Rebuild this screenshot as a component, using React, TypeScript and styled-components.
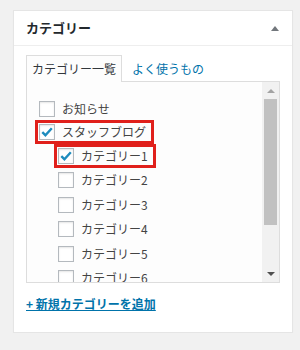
import React from "react";
import styled, { createGlobalStyle } from "styled-components";

const GlobalStyle = createGlobalStyle`
  html, body {
    margin: 0;
    padding: 0;
    background: #f1f1f1;
  }
  body {
    font-family: "Noto Sans CJK JP", "Noto Sans", sans-serif;
    font-size: 12px;
    color: #444;
  }
`;

const Page = styled.div`
  padding: 10px 0 0 13px;
`;

const Panel = styled.div`
  width: 280px;
  box-sizing: border-box;
  border: 1px solid #e5e5e5;
  background: #fff;
  box-shadow: 0 1px 1px rgba(0, 0, 0, 0.04);
`;

const Header = styled.div`
  height: 34px;
  border-bottom: 1px solid #eee;
  display: flex;
  align-items: center;
  justify-content: space-between;
  padding: 0 13px 0 12px;
`;

const Title = styled.h2`
  margin: 0;
  font-size: 13px;
  font-weight: bold;
  color: #23282d;
  line-height: 18px;
`;

const Toggle = styled.span`
  width: 0;
  height: 0;
  border-left: 4px solid transparent;
  border-right: 4px solid transparent;
  border-bottom: 5px solid #72777c;
`;

const Body = styled.div`
  padding: 9px 12px 20px 12px;
`;

const Tabs = styled.ul`
  display: flex;
  align-items: flex-end;
  margin: 0;
  padding: 0;
  list-style: none;
  position: relative;
  z-index: 1;
`;

const Tab = styled.li<{ $active?: boolean }>`
  height: 27px;
  box-sizing: border-box;
  line-height: 25px;
  padding: ${(p) => (p.$active ? "0 5px" : "0 0 0 9px")};
  margin-bottom: -1px;
  border: 1px solid ${(p) => (p.$active ? "#ddd" : "transparent")};
  border-bottom: none;
  background: ${(p) => (p.$active ? "#fdfdfd" : "transparent")};
  color: ${(p) => (p.$active ? "#32373c" : "#0073aa")};
  cursor: pointer;
`;

const Box = styled.div`
  display: flex;
  height: 202px;
  box-sizing: border-box;
  border: 1px solid #ddd;
  background: #fdfdfd;
`;

const List = styled.ul`
  flex: 1;
  margin: 0;
  padding: 15.5px 0 0 12px;
  list-style: none;
  overflow: hidden;
`;

const Children = styled.ul`
  margin: 0;
  padding: 0 0 0 19px;
  list-style: none;
`;

const Row = styled.div<{ $first?: boolean }>`
  display: flex;
  align-items: center;
  height: ${(p) => (p.$first ? "22px" : "24.4px")};
`;

const Label = styled.label<{ $marked?: boolean }>`
  display: inline-flex;
  align-items: center;
  gap: 7px;
  height: 18px;
  padding: 0 5px 0 1px;
  margin-left: -1px;
  line-height: 18px;
  color: #444;
  outline: ${(p) => (p.$marked ? "3px solid #e0201b" : "none")};
`;

const CheckBox = styled.span`
  width: 16px;
  height: 16px;
  box-sizing: border-box;
  border: 1px solid #b4b9be;
  background: #fff;
  box-shadow: inset 0 1px 2px rgba(0, 0, 0, 0.1);
  display: flex;
  align-items: center;
  justify-content: center;
`;

const Scrollbar = styled.div`
  width: 17px;
  display: flex;
  flex-direction: column;
  background: #f1f1f1;
`;

const ScrollButton = styled.div<{ $down?: boolean }>`
  height: 17px;
  display: flex;
  align-items: center;
  justify-content: center;

  &::after {
    content: "";
    width: 0;
    height: 0;
    border-left: 4px solid transparent;
    border-right: 4px solid transparent;
    ${(p) =>
      p.$down
        ? "border-top: 4px solid #505050;"
        : "border-bottom: 4px solid #a3a3a3;"}
  }
`;

const Track = styled.div`
  flex: 1;
  padding: 0 2px;
`;

const Thumb = styled.div`
  height: 126px;
  background: #c1c1c1;
`;

const AddLink = styled.a`
  display: inline-block;
  margin-top: 13px;
  font-weight: bold;
  line-height: 16px;
  color: #0073aa;
  text-decoration: underline;
  cursor: pointer;
`;

type Cat = { name: string; checked?: boolean; marked?: boolean; children?: Cat[] };

const categories: Cat[] = [
  { name: "お知らせ" },
  {
    name: "スタッフブログ",
    checked: true,
    marked: true,
    children: [
      { name: "カテゴリー1", checked: true, marked: true },
      { name: "カテゴリー2" },
      { name: "カテゴリー3" },
      { name: "カテゴリー4" },
      { name: "カテゴリー5" },
      { name: "カテゴリー6" },
    ],
  },
];

const Check = () => (
  <svg width="14" height="14" viewBox="0 0 14 14">
    <path
      d="M2.3 7.2 L5.4 10.2 L11.8 3.2"
      fill="none"
      stroke="#1e8cbe"
      strokeWidth="2.4"
      strokeLinejoin="miter"
    />
  </svg>
);

const CategoryItem = ({ cat, first }: { cat: Cat; first?: boolean }) => (
  <li>
    <Row $first={first}>
      <Label $marked={cat.marked}>
        <CheckBox>{cat.checked && <Check />}</CheckBox>
        {cat.name}
      </Label>
    </Row>
    {cat.children && (
      <Children>
        {cat.children.map((c) => (
          <CategoryItem key={c.name} cat={c} />
        ))}
      </Children>
    )}
  </li>
);

export default function App() {
  return (
    <>
      <GlobalStyle />
      <Page>
        <Panel>
          <Header>
            <Title>カテゴリー</Title>
            <Toggle />
          </Header>
          <Body>
            <Tabs>
              <Tab $active>カテゴリー一覧</Tab>
              <Tab>よく使うもの</Tab>
            </Tabs>
            <Box>
              <List>
                {categories.map((c, i) => (
                  <CategoryItem key={c.name} cat={c} first={i === 0} />
                ))}
              </List>
              <Scrollbar>
                <ScrollButton />
                <Track>
                  <Thumb />
                </Track>
                <ScrollButton $down />
              </Scrollbar>
            </Box>
            <AddLink>+ 新規カテゴリーを追加</AddLink>
          </Body>
        </Panel>
      </Page>
    </>
  );
}
